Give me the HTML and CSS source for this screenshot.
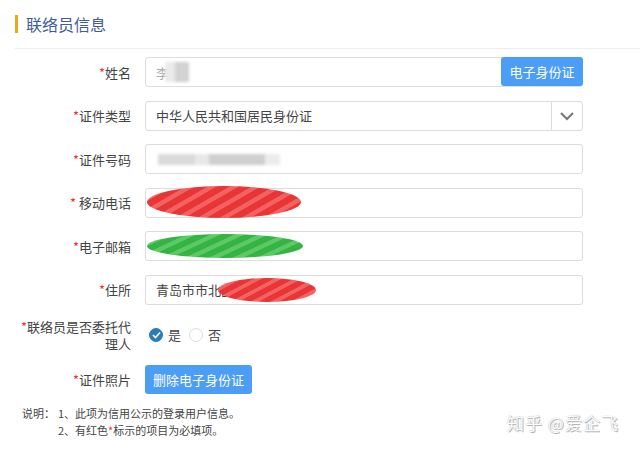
FILE: index.html
```html
<!DOCTYPE html>
<html lang="zh-CN">
<head>
    <meta charset="UTF-8">
    <title>联络员信息</title>
    <link rel="stylesheet" href="styles.css">
</head>
<body>
    <div class="panel">
        <div class="panel-title">联络员信息</div>
        <div class="divider"></div>

        <div class="form">
            <div class="form-row">
                <label class="label"><i>*</i>姓名</label>
                <div class="field">
                    <div class="input input-group">
                        <span class="text masked-name">李</span>
                        <span class="blur blur-name"></span>
                        <button class="btn btn-addon">电子身份证</button>
                    </div>
                </div>
            </div>

            <div class="form-row">
                <label class="label"><i>*</i>证件类型</label>
                <div class="field">
                    <div class="input select">
                        <span class="text">中华人民共和国居民身份证</span>
                        <span class="select-arrow">
                            <svg width="16" height="10" viewBox="0 0 16 10"><path d="M2 2 L8 8 L14 2" fill="none" stroke="#777" stroke-width="2"/></svg>
                        </span>
                    </div>
                </div>
            </div>

            <div class="form-row">
                <label class="label"><i>*</i>证件号码</label>
                <div class="field">
                    <div class="input">
                        <span class="blur blur-id"></span>
                    </div>
                </div>
            </div>

            <div class="form-row">
                <label class="label"><i>*</i> 移动电话</label>
                <div class="field">
                    <div class="input"></div>
                    <svg class="scribble scribble-phone" width="156" height="36" viewBox="0 0 156 36">
                        <defs>
                            <pattern id="stripesRed" width="22" height="36" patternUnits="userSpaceOnUse" patternTransform="skewX(-60)">
                                <rect width="22" height="36" fill="#e93535"/>
                                <rect x="0" width="9" height="36" fill="#f36262"/>
                            </pattern>
                        </defs>
                        <ellipse cx="78" cy="18" rx="77" ry="16" fill="url(#stripesRed)"/>
                    </svg>
                </div>
            </div>

            <div class="form-row">
                <label class="label"><i>*</i>电子邮箱</label>
                <div class="field">
                    <div class="input"></div>
                    <svg class="scribble scribble-mail" width="158" height="30" viewBox="0 0 158 30">
                        <defs>
                            <pattern id="stripesGreen" width="24" height="30" patternUnits="userSpaceOnUse" patternTransform="skewX(-65)">
                                <rect width="24" height="30" fill="#35b443"/>
                                <rect x="0" width="10" height="30" fill="#5cc866"/>
                            </pattern>
                        </defs>
                        <ellipse cx="79" cy="15" rx="78" ry="12" fill="url(#stripesGreen)"/>
                    </svg>
                </div>
            </div>

            <div class="form-row">
                <label class="label"><i>*</i>住所</label>
                <div class="field">
                    <div class="input">
                        <span class="text">青岛市市北区</span>
                    </div>
                    <svg class="scribble scribble-addr" width="100" height="26" viewBox="0 0 100 26">
                        <defs>
                            <pattern id="stripesRed2" width="20" height="26" patternUnits="userSpaceOnUse" patternTransform="skewX(-62)">
                                <rect width="20" height="26" fill="#e93535"/>
                                <rect x="0" width="8" height="26" fill="#f36262"/>
                            </pattern>
                        </defs>
                        <ellipse cx="50" cy="13" rx="49" ry="12" fill="url(#stripesRed2)"/>
                    </svg>
                </div>
            </div>

            <div class="form-row row-radio">
                <label class="label label-wrap"><i>*</i>联络员是否委托代理人</label>
                <div class="field radios">
                    <span class="radio checked">
                        <svg width="9" height="8" viewBox="0 0 9 8"><path d="M1 4 L3.5 6.5 L8 1.5" fill="none" stroke="#fff" stroke-width="1.6"/></svg>
                    </span>
                    <span class="radio-text">是</span>
                    <span class="radio"></span>
                    <span class="radio-text">否</span>
                </div>
            </div>

            <div class="form-row row-photo">
                <label class="label"><i>*</i>证件照片</label>
                <div class="field">
                    <button class="btn btn-delete">删除电子身份证</button>
                </div>
            </div>
        </div>

        <div class="notes">
            <span class="notes-head">说明：</span>
            <div class="notes-list">
                <div>1、此项为信用公示的登录用户信息。</div>
                <div>2、有红色<i>*</i>标示的项目为必填项。</div>
            </div>
        </div>

        <div class="watermark">知乎 @爱企飞</div>
    </div>
</body>
</html>
```

FILE: styles.css
```css
body {
    margin: 0;
    background: #fff;
    font-family: "Noto Sans CJK SC", "Liberation Sans", sans-serif;
    font-size: 13px;
    color: #333;
}

.panel {
    position: relative;
    width: 640px;
    height: 449px;
    overflow: hidden;
}

.panel-title {
    margin: 15px 0 0 15px;
    padding-left: 8px;
    border-left: 3px solid #f0a51e;
    font-size: 16px;
    line-height: 18px;
    color: #3e5c9c;
}

.divider {
    margin: 15px 0 0 15px;
    border-top: 1px solid #ececec;
}

.form {
    margin-top: 8px;
    display: flex;
    flex-direction: column;
    gap: 13.6px;
}

.form-row {
    display: flex;
    align-items: center;
}

.label {
    width: 131px;
    margin-right: 14px;
    text-align: right;
    color: #444;
}

.label i,
.notes i {
    font-style: normal;
    color: #e33;
}

.field {
    position: relative;
    width: 438px;
}

.input {
    position: relative;
    height: 30px;
    box-sizing: border-box;
    border: 1px solid #dcdcdc;
    border-radius: 3px;
    display: flex;
    align-items: center;
    padding-left: 10px;
    background: #fff;
}

.text {
    color: #444;
}

.masked-name {
    color: #aaa;
}

.blur {
    display: inline-block;
    background: #d4d4d4;
    filter: blur(1.5px);
}

.blur-name {
    width: 24px;
    height: 20px;
    margin-left: -4px;
    background: linear-gradient(to right, #eaeaea 0 40%, #d2d2d2 40% 100%);
}

.blur-id {
    width: 122px;
    height: 11px;
    margin-left: 2px;
    background: linear-gradient(to right, #dadada 0 30%, #e8e8e8 30% 42%, #cfcfcf 42% 88%, #ececec 88%);
}

.input-group {
    padding-right: 0;
}

.btn {
    border: none;
    border-radius: 3px;
    background: #4b9df6;
    color: #fff;
    font-family: inherit;
    font-size: 13px;
    cursor: pointer;
}

.btn-addon {
    margin-left: auto;
    height: 29px;
    width: 82px;
    margin-right: -1px;
    margin-top: -1px;
}

.select-arrow {
    margin-left: auto;
    width: 30px;
    height: 100%;
    border-left: 1px solid #dcdcdc;
    display: flex;
    align-items: center;
    justify-content: center;
}

.scribble {
    position: absolute;
    display: block;
}

.scribble-phone {
    left: 1px;
    top: -4px;
}

.scribble-mail {
    left: 1px;
    top: 0;
}

.scribble-addr {
    left: 72px;
    top: 2px;
}

.row-radio {
    margin-top: -1px;
}

.label-wrap {
    line-height: 17px;
    padding-left: 16px;
    box-sizing: border-box;
}

.radios {
    display: flex;
    align-items: center;
    padding-left: 4px;
}

.radio {
    width: 12px;
    height: 12px;
    border: 1px solid #dedede;
    border-radius: 50%;
    display: flex;
    align-items: center;
    justify-content: center;
}

.radio.checked {
    background: #2a7cbd;
    border-color: #2a7cbd;
}

.radio-text {
    margin: 0 8px 0 5px;
    color: #444;
}

.row-photo {
    margin-top: 0;
}

.btn-delete {
    width: 107px;
    height: 29px;
}

.notes {
    display: flex;
    margin: 11px 0 0 22px;
    font-size: 11px;
    line-height: 17px;
    color: #444;
}

.notes-list {
    margin-left: 3px;
}

.watermark {
    position: absolute;
    left: 507px;
    top: 410px;
    font-size: 17px;
    color: #fff;
    text-shadow: 0 0 1px #999, 1px 1px 0 #bbb;
    letter-spacing: 1px;
}
```
